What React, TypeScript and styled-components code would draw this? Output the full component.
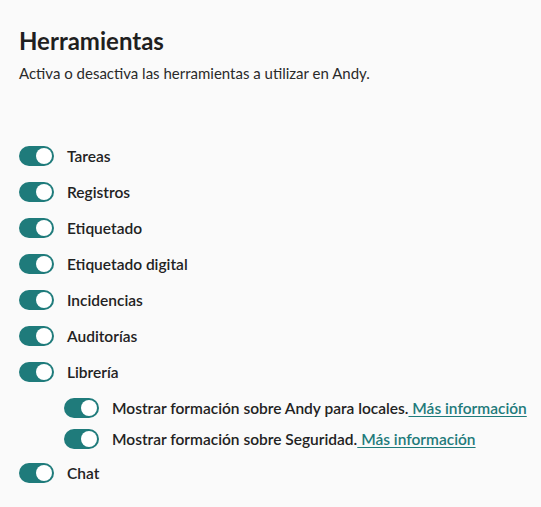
import React, { useState } from 'react';
import styled, { createGlobalStyle } from 'styled-components';

const GlobalStyle = createGlobalStyle`
  html, body {
    margin: 0;
    padding: 0;
    background: #fafafa;
  }
  body {
    font-family: "Lato", "Noto Sans", sans-serif;
    color: #222222;
  }
`;

const Page = styled.div`
  padding: 26px 8px 20px 19px;
`;

const Title = styled.h1`
  margin: 0;
  font-size: 24px;
  font-weight: 700;
  line-height: 30px;
  color: #1f1f1f;
`;

const Subtitle = styled.p`
  margin: 7px 0 0 0;
  font-size: 15px;
  line-height: 20px;
  color: #2a2a2a;
`;

const List = styled.div`
  margin-top: 55px;
  display: flex;
  flex-direction: column;
`;

const SubList = styled.div`
  display: flex;
  flex-direction: column;
  padding: 2px 0 0 45px;
`;

const Row = styled.label<{ $nested?: boolean }>`
  display: flex;
  align-items: center;
  gap: 13px;
  height: ${p => (p.$nested ? 31.5 : 36)}px;
  font-size: 15.5px;
  font-weight: 600;
  color: #222222;
  cursor: pointer;
`;

const Label = styled.span`
  white-space: nowrap;
`;

const Track = styled.span<{ $on: boolean }>`
  flex: none;
  width: 35px;
  height: 20px;
  border-radius: 10px;
  background: ${p => (p.$on ? '#1f7b7b' : '#b9b9b9')};
  display: flex;
  align-items: center;
  justify-content: ${p => (p.$on ? 'flex-end' : 'flex-start')};
  padding: 0 2px;
  box-sizing: border-box;
`;

const Knob = styled.span`
  width: 16px;
  height: 16px;
  border-radius: 50%;
  background: #ffffff;
`;

const Link = styled.a`
  color: #1f7b7b;
  text-decoration: underline;
  text-underline-offset: 2px;
`;

type Tool = { id: string; label: string; link?: boolean; children?: Tool[] };

const tools: Tool[] = [
  { id: 'tareas', label: 'Tareas' },
  { id: 'registros', label: 'Registros' },
  { id: 'etiquetado', label: 'Etiquetado' },
  { id: 'etiquetado-digital', label: 'Etiquetado digital' },
  { id: 'incidencias', label: 'Incidencias' },
  { id: 'auditorias', label: 'Auditorías' },
  {
    id: 'libreria',
    label: 'Librería',
    children: [
      { id: 'formacion-andy', label: 'Mostrar formación sobre Andy para locales.', link: true },
      { id: 'formacion-seguridad', label: 'Mostrar formación sobre Seguridad.', link: true },
    ],
  },
  { id: 'chat', label: 'Chat' },
];

const allIds = tools.flatMap(t => [t.id, ...(t.children ?? []).map(c => c.id)]);

const Toggle: React.FC<{ on: boolean; onChange: () => void }> = ({ on, onChange }) => (
  <Track $on={on} role="switch" aria-checked={on} onClick={onChange}>
    <Knob />
  </Track>
);

const App: React.FC = () => {
  const [enabled, setEnabled] = useState<Record<string, boolean>>(
    Object.fromEntries(allIds.map(id => [id, true]))
  );

  const toggle = (id: string) => setEnabled(prev => ({ ...prev, [id]: !prev[id] }));

  const renderRow = (t: Tool, nested?: boolean) => (
    <Row key={t.id} $nested={nested}>
      <Toggle on={enabled[t.id]} onChange={() => toggle(t.id)} />
      <Label>
        {t.label}
        {t.link && <Link href="#"> Más información</Link>}
      </Label>
    </Row>
  );

  return (
    <>
      <GlobalStyle />
      <Page>
        <Title>Herramientas</Title>
        <Subtitle>Activa o desactiva las herramientas a utilizar en Andy.</Subtitle>
        <List>
          {tools.map(t => (
            <React.Fragment key={t.id}>
              {renderRow(t)}
              {t.children && <SubList>{t.children.map(c => renderRow(c, true))}</SubList>}
            </React.Fragment>
          ))}
        </List>
      </Page>
    </>
  );
};

export default App;
